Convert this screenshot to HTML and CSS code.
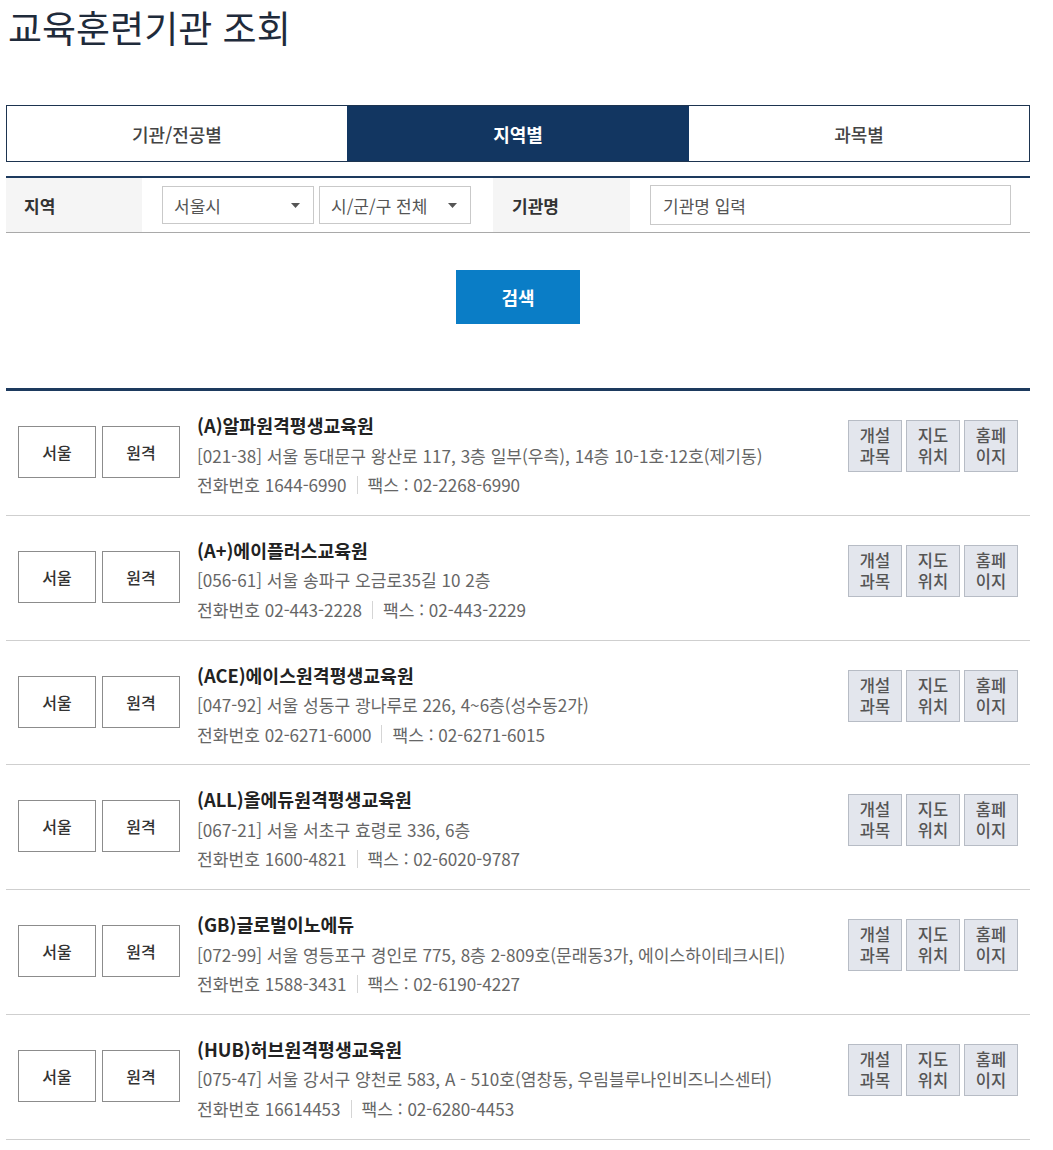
FILE: index.html
```html
<!DOCTYPE html>
<html lang="ko">
<head>
<meta charset="utf-8">
<title>교육훈련기관 조회</title>
<link rel="stylesheet" href="styles.css">
</head>
<body>
<div class="page">
  <h1 class="title">교육훈련기관 조회</h1>

  <div class="tabs">
    <div class="tab">기관/전공별</div>
    <div class="tab active">지역별</div>
    <div class="tab">과목별</div>
  </div>

  <div class="filter">
    <div class="label">지역</div>
    <div class="select sel1"><span>서울시</span><svg width="9" height="5" viewBox="0 0 9 5"><path d="M0 0h9L4.5 5z" fill="#555"/></svg></div>
    <div class="select sel2"><span>시/군/구 전체</span><svg width="9" height="5" viewBox="0 0 9 5"><path d="M0 0h9L4.5 5z" fill="#555"/></svg></div>
    <div class="label label2">기관명</div>
    <input class="name-input" type="text" placeholder="기관명 입력">
  </div>

  <div class="search-wrap"><button class="search-btn">검색</button></div>

  <ul class="results">
    <li class="row">
      <div class="tags"><span class="tag">서울</span><span class="tag">원격</span></div>
      <div class="info">
        <div class="name">(A)알파원격평생교육원</div>
        <div class="addr">[021-38] 서울 동대문구 왕산로 117, 3층 일부(우측), 14층 10-1호·12호(제기동)</div>
        <div class="tel"><span>전화번호 1644-6990</span><span class="sep"></span><span>팩스 : 02-2268-6990</span></div>
      </div>
      <div class="btns"><span class="btn">개설<br>과목</span><span class="btn">지도<br>위치</span><span class="btn">홈페<br>이지</span></div>
    </li>
    <li class="row">
      <div class="tags"><span class="tag">서울</span><span class="tag">원격</span></div>
      <div class="info">
        <div class="name">(A+)에이플러스교육원</div>
        <div class="addr">[056-61] 서울 송파구 오금로35길 10 2층</div>
        <div class="tel"><span>전화번호 02-443-2228</span><span class="sep"></span><span>팩스 : 02-443-2229</span></div>
      </div>
      <div class="btns"><span class="btn">개설<br>과목</span><span class="btn">지도<br>위치</span><span class="btn">홈페<br>이지</span></div>
    </li>
    <li class="row">
      <div class="tags"><span class="tag">서울</span><span class="tag">원격</span></div>
      <div class="info">
        <div class="name">(ACE)에이스원격평생교육원</div>
        <div class="addr">[047-92] 서울 성동구 광나루로 226, 4~6층(성수동2가)</div>
        <div class="tel"><span>전화번호 02-6271-6000</span><span class="sep"></span><span>팩스 : 02-6271-6015</span></div>
      </div>
      <div class="btns"><span class="btn">개설<br>과목</span><span class="btn">지도<br>위치</span><span class="btn">홈페<br>이지</span></div>
    </li>
    <li class="row">
      <div class="tags"><span class="tag">서울</span><span class="tag">원격</span></div>
      <div class="info">
        <div class="name">(ALL)올에듀원격평생교육원</div>
        <div class="addr">[067-21] 서울 서초구 효령로 336, 6층</div>
        <div class="tel"><span>전화번호 1600-4821</span><span class="sep"></span><span>팩스 : 02-6020-9787</span></div>
      </div>
      <div class="btns"><span class="btn">개설<br>과목</span><span class="btn">지도<br>위치</span><span class="btn">홈페<br>이지</span></div>
    </li>
    <li class="row">
      <div class="tags"><span class="tag">서울</span><span class="tag">원격</span></div>
      <div class="info">
        <div class="name">(GB)글로벌이노에듀</div>
        <div class="addr">[072-99] 서울 영등포구 경인로 775, 8층 2-809호(문래동3가, 에이스하이테크시티)</div>
        <div class="tel"><span>전화번호 1588-3431</span><span class="sep"></span><span>팩스 : 02-6190-4227</span></div>
      </div>
      <div class="btns"><span class="btn">개설<br>과목</span><span class="btn">지도<br>위치</span><span class="btn">홈페<br>이지</span></div>
    </li>
    <li class="row">
      <div class="tags"><span class="tag">서울</span><span class="tag">원격</span></div>
      <div class="info">
        <div class="name">(HUB)허브원격평생교육원</div>
        <div class="addr">[075-47] 서울 강서구 양천로 583, A - 510호(염창동, 우림블루나인비즈니스센터)</div>
        <div class="tel"><span>전화번호 16614453</span><span class="sep"></span><span>팩스 : 02-6280-4453</span></div>
      </div>
      <div class="btns"><span class="btn">개설<br>과목</span><span class="btn">지도<br>위치</span><span class="btn">홈페<br>이지</span></div>
    </li>
  </ul>
</div>
</body>
</html>
```

FILE: styles.css
```css
* { box-sizing: border-box; }
html, body { margin: 0; padding: 0; background: #fff; }
body {
  font-family: "Noto Sans CJK KR", "Noto Sans", sans-serif;
  color: #333;
}
.page {
  width: 1024px;
  margin-left: 6px;
}
.title {
  margin: 0;
  padding: 4px 0 0 2px;
  height: 105px;
  font-size: 37px;
  font-weight: 400;
  line-height: 46px;
  color: #1f2b3b;
  letter-spacing: 0;
}
.tabs {
  display: flex;
  height: 57px;
  border: 1px solid #1d3450;
}
.tab {
  flex: 1 1 0;
  display: flex;
  align-items: center;
  justify-content: center;
  font-size: 18px;
  font-weight: 500;
  color: #444;
}
.tab.active {
  background: #123661;
  color: #fff;
  font-weight: 700;
  flex: 0 0 342px;
}
.filter {
  margin-top: 14px;
  border-top: 2px solid #1d3a5e;
  border-bottom: 1px solid #a9a9a9;
  height: 57px;
  display: flex;
  align-items: center;
}
.label {
  align-self: stretch;
  width: 136px;
  background: #f5f5f5;
  display: flex;
  align-items: center;
  padding-left: 18px;
  font-size: 17px;
  font-weight: 700;
  color: #333;
}
.label2 {
  width: 137px;
  margin-left: 22px;
  padding-left: 19px;
}
.select {
  height: 38px;
  width: 152px;
  border: 1px solid #c9c9c9;
  display: flex;
  align-items: center;
  justify-content: space-between;
  padding: 0 13px 0 11px;
  font-size: 17px;
  color: #555;
}
.sel1 { margin-left: 20px; }
.sel2 { margin-left: 5px; }
.name-input {
  margin-left: 20px;
  width: 361px;
  height: 40px;
  border: 1px solid #c9c9c9;
  padding: 0 12px;
  font-family: inherit;
  font-size: 17px;
  color: #555;
  outline: none;
}
.name-input::placeholder { color: #555; }
.search-wrap {
  display: flex;
  justify-content: center;
  padding: 37px 0 64px;
}
.search-btn {
  width: 124px;
  height: 54px;
  border: 0;
  background: #0a7dc6;
  color: #fff;
  font-family: inherit;
  font-size: 18px;
  font-weight: 700;
  cursor: pointer;
}
.results {
  list-style: none;
  margin: 0;
  padding: 0;
  border-top: 3px solid #1d3a5e;
}
.row {
  display: flex;
  align-items: flex-start;
  padding: 20px 12px 15.3px 12px;
  border-bottom: 1px solid #cfcfcf;
}
.tags {
  display: flex;
  gap: 6px;
  margin-top: 15px;
}
.tag {
  width: 78px;
  height: 52px;
  border: 1px solid #8c8c8c;
  display: flex;
  align-items: center;
  justify-content: center;
  font-size: 16px;
  font-weight: 500;
  color: #333;
}
.info {
  flex: 1;
  margin-left: 17px;
  line-height: 29.5px;
}
.name {
  font-size: 18.3px;
  font-weight: 700;
  color: #222;
}
.addr, .tel {
  font-size: 17.1px;
  color: #666;
}
.tel { display: flex; align-items: center; }
.sep {
  width: 1px;
  height: 18px;
  background: #d5d5d5;
  margin: 0 10px;
}
.btns {
  display: flex;
  gap: 4px;
  margin-top: 9px;
}
.btn {
  width: 54px;
  height: 52px;
  background: #e3e6ed;
  border: 1px solid #b7bcc5;
  display: flex;
  align-items: center;
  justify-content: center;
  text-align: center;
  font-size: 16.5px;
  font-weight: 500;
  line-height: 21px;
  color: #555;
}
```
